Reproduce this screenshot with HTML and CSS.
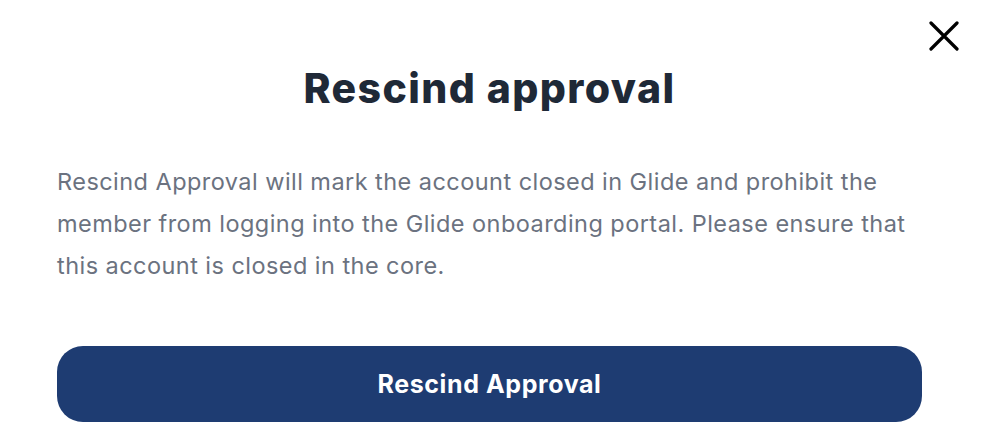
FILE: index.html
```html
<!DOCTYPE html>
<html lang="en">
<head>
<meta charset="utf-8">
<link rel="stylesheet" href="styles.css">
</head>
<body>
<div class="modal">
  <button class="close" aria-label="Close">
    <svg width="30" height="30" viewBox="0 0 30 30"><path d="M2 2 L28 28 M28 2 L2 28" stroke="#000" stroke-width="3.2" stroke-linecap="round"/></svg>
  </button>
  <h1 class="title">Rescind approval</h1>
  <p class="body-text">Rescind Approval will mark the account closed in Glide and prohibit the member from logging into the Glide onboarding portal. Please ensure that this account is closed in the core.</p>
  <button class="primary">Rescind Approval</button>
</div>
</body>
</html>
```
FILE: styles.css
```css
html, body {
  margin: 0;
  padding: 0;
  background: #fff;
}
.modal {
  position: relative;
  padding: 60px 68px 0 57px;
  font-family: Inter, "Noto Sans", sans-serif;
}
.close {
  position: absolute;
  top: 21px;
  right: 31px;
  background: none;
  border: 0;
  padding: 0;
  width: 30px;
  height: 30px;
  cursor: pointer;
}
.close svg { display: block; }
.title {
  margin: 0;
  text-align: center;
  font-size: 41px;
  line-height: 56px;
  font-weight: 800;
  letter-spacing: 1.4px;
  color: #1f2937;
}
.body-text {
  margin: 45px 0 0 0;
  font-size: 23.5px;
  line-height: 42px;
  letter-spacing: 0.45px;
  color: #6b7280;
}
.primary {
  display: block;
  width: 100%;
  margin-top: 59px;
  height: 76px;
  border: 0;
  border-radius: 26px;
  background: #1e3c72;
  color: #fff;
  font-family: Inter, "Noto Sans", sans-serif;
  font-size: 25px;
  font-weight: 700;
  letter-spacing: 0.6px;
  cursor: pointer;
}
```
